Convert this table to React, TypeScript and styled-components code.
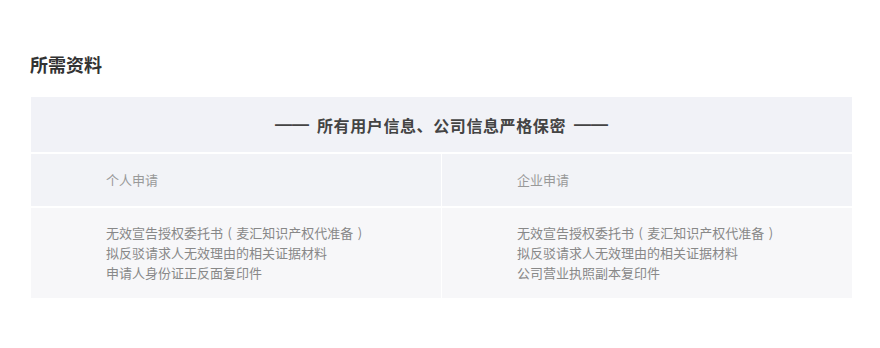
import React from "react";
import styled, { createGlobalStyle } from "styled-components";

const GlobalStyle = createGlobalStyle`
  body {
    margin: 0;
    background: #fff;
    font-family: "Noto Sans CJK SC", "Noto Sans", sans-serif;
  }
`;

const personal = ["无效宣告授权委托书 ( 麦汇知识产权代准备 )", "拟反驳请求人无效理由的相关证据材料", "申请人身份证正反面复印件"];
const company = ["无效宣告授权委托书 ( 麦汇知识产权代准备 )", "拟反驳请求人无效理由的相关证据材料", "公司营业执照副本复印件"];

const Section = styled.div`
  width: 821px;
  padding: 52px 0 0 31px;
`;

const Title = styled.h2`
  margin: 0 0 21px -1px;
  font-size: 18px;
  line-height: 24px;
  font-weight: 700;
  color: #333;
`;

const Table = styled.div`
  display: flex;
  flex-direction: column;
  gap: 2px;
`;

const Banner = styled.div`
  height: 55px;
  display: flex;
  align-items: center;
  justify-content: center;
  gap: 8px;
  background: #f1f2f7;
  font-size: 16px;
  font-weight: 700;
  letter-spacing: 0.6px;
  color: #444;
`;

const Dash = styled.span`
  font-family: "Liberation Sans", Arial, sans-serif;
  font-weight: 700;
  letter-spacing: 0;
  font-size: 17px;
`;

const Row = styled.div`
  display: grid;
  grid-template-columns: 1fr 1fr;
  gap: 1px;
`;

const Cell = styled.div<{ $body?: boolean }>`
  background: ${p => (p.$body ? "#f7f7f9" : "#f2f3f7")};
  padding: ${p => (p.$body ? "15px 0 15px 75px" : "0 0 0 75px")};
  height: ${p => (p.$body ? "60px" : "52px")};
  display: flex;
  flex-direction: column;
  justify-content: center;
  font-size: 13px;
  line-height: 20px;
  white-space: pre;
  word-spacing: 1.5px;
  color: ${p => (p.$body ? "#888" : "#999")};
`;

export default function App() {
  return (
    <>
      <GlobalStyle />
      <Section>
        <Title>所需资料</Title>
        <Table>
          <Banner>
            <Dash>——</Dash>
            所有用户信息、公司信息严格保密
            <Dash>——</Dash>
          </Banner>
          <Row>
            <Cell>个人申请</Cell>
            <Cell>企业申请</Cell>
          </Row>
          <Row>
            <Cell $body>
              {personal.map(t => (
                <div key={t}>{t}</div>
              ))}
            </Cell>
            <Cell $body>
              {company.map(t => (
                <div key={t}>{t}</div>
              ))}
            </Cell>
          </Row>
        </Table>
      </Section>
    </>
  );
}
